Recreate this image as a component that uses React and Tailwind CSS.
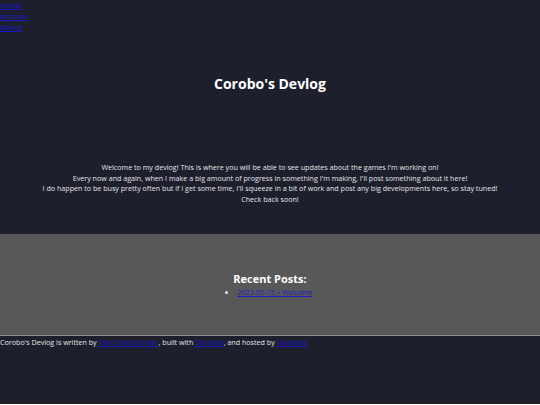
export default function App() {
  const font = { fontFamily: '"Open Sans", "Liberation Sans", sans-serif' }
  return (
    <div className="min-h-[405px] bg-[#1e1f2c] text-[#e4e4e8]" style={font}>
      {/* Nav */}
      <nav className="flex flex-col text-[8px] leading-[11px] -mt-[1px]">
        <a href="#" className="text-[#1818c8] underline w-fit">Home</a>
        <a href="#" className="text-[#1818c8] underline w-fit">Archive</a>
        <a href="#" className="text-[#1818c8] underline w-fit">About</a>
      </nav>

      {/* Header */}
      <header className="pt-[41px] text-center">
        <h1 className="text-[14px] font-bold leading-[22px] text-white">Corobo's Devlog</h1>
        <div className="pt-[67px] pb-[29px] text-[7.15px] leading-[10.7px]">
          <p>Welcome to my devlog! This is where you will be able to see updates about the games I'm working on!</p>
          <p>Every now and again, when I make a big amount of progress in something I'm making, I'll post something about it here!</p>
          <p>I do happen to be busy pretty often but if I get some time, I'll squeeze in a bit of work and post any big developments here, so stay tuned!</p>
          <p>Check back soon!</p>
        </div>
      </header>

      {/* Recent posts */}
      <section className="bg-[#585858] border-b border-[#8e8e94] h-[102px] pt-[38px] flex flex-col items-center">
        <h2 className="text-[11px] font-bold leading-[14px] text-white">Recent Posts:</h2>
        <ul className="list-disc pl-[10px] text-[7.15px] leading-[11px] mt-[1px]">
          <li><a href="#" className="text-[#2020c0] underline">2023-05-15 » Welcome</a></li>
        </ul>
      </section>

      {/* Footer */}
      <footer className="text-[7.15px] leading-[11px] pt-[1px]">
        Corobo's Devlog is written by <a href="#" className="text-[#1818c8] underline">TheCoroboCorner</a>, built with <a href="#" className="text-[#1818c8] underline">Zonelets</a>, and hosted by <a href="#" className="text-[#1818c8] underline">Neocities</a>
      </footer>
    </div>
  )
}
